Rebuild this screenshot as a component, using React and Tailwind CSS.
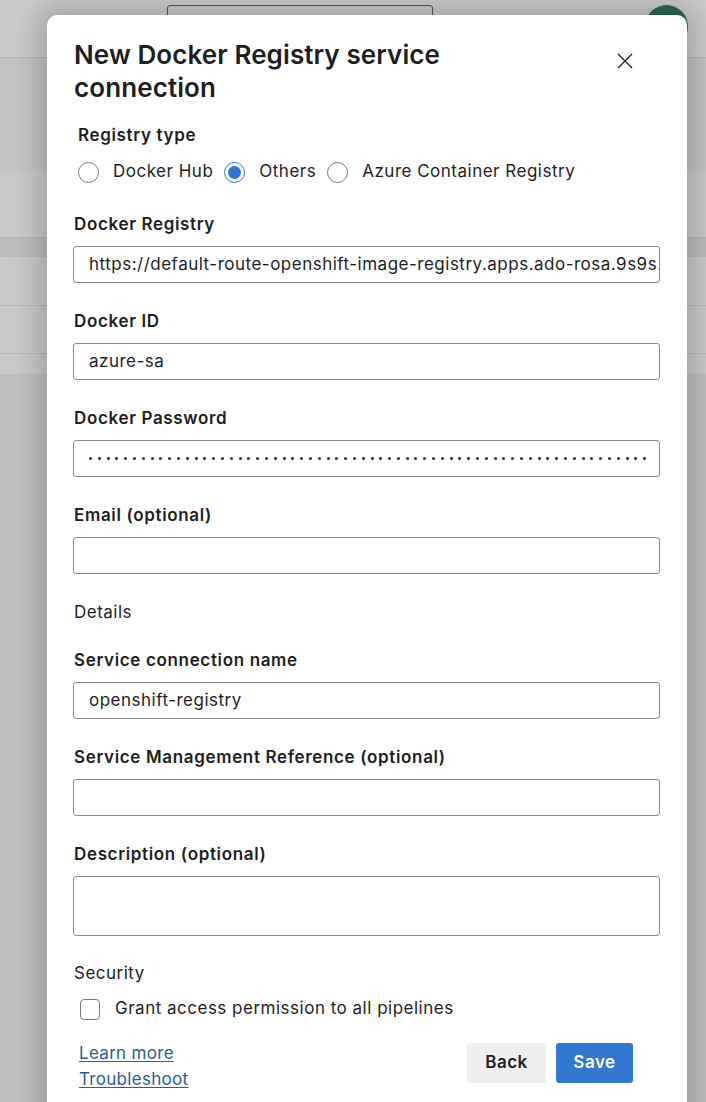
import { useState } from "react";

function Field({ label, value, tall, password }) {
  return (
    <div className="flex flex-col">
      <div className="h-6 leading-6 text-[17px] font-semibold tracking-[0.65px]">{label}</div>
      <div
        className={`-ml-px mt-[10px] w-[587px] rounded-[3px] border border-[#8a8a8a] px-[15px] overflow-hidden whitespace-nowrap ${
          tall ? "h-[60px]" : "h-[37px]"
        } flex items-center text-[17px] tracking-[0.5px]`}
      >
        {password ? (
          <div className="flex gap-[5.8px]">
            {Array.from({ length: 64 }).map((_, i) => (
              <span key={i} className="block h-[3px] w-[3px] shrink-0 rounded-full bg-[#333]" />
            ))}
          </div>
        ) : (
          value
        )}
      </div>
    </div>
  );
}

function Radio({ label, checked }) {
  return (
    <label className="flex items-center">
      {checked ? (
        <span className="flex h-[21px] w-[21px] items-center justify-center rounded-full border-[1.5px] border-[#2f6fd3]">
          <span className="h-[13px] w-[13px] rounded-full bg-[#2f73d8]" />
        </span>
      ) : (
        <span className="h-[21px] w-[21px] rounded-full border border-[#7a7a7a] bg-white" />
      )}
      <span className="ml-[14px] mr-[11px]">{label}</span>
    </label>
  );
}

export default function App() {
  const [grant, setGrant] = useState(false);

  return (
    <div className="relative h-[1102px] w-[706px] overflow-hidden bg-[#bfbfbf] font-[Inter,sans-serif] text-[#1e1e1e]">
      {/* dimmed page behind */}
      <div className="flex h-[58px] items-start border-b border-[#b5b5b5] bg-[#cacaca]">
        <div className="ml-[167px] mt-[5px] h-[40px] w-[266px] rounded-[3px] border border-[#555]" />
        <div className="ml-auto mr-[18px] mt-[5px] h-[43px] w-[43px] rounded-full bg-[#2b6657]" />
      </div>
      <div className="flex flex-col">
        <div className="h-[113px] bg-[#c3c3c3]" />
        <div className="h-[67px] border-b border-[#b8b8b8] bg-[#c9c9c9]" />
        <div className="h-[19px] bg-[#bcbcbc]" />
        <div className="h-[49px] border-b border-[#b8b8b8] bg-[#c9c9c9]" />
        <div className="h-[48px] border-b border-[#b8b8b8] bg-[#c9c9c9]" />
        <div className="h-[20px] bg-[#c9c9c9]" />
      </div>

      {/* modal */}
      <div className="absolute left-[47px] top-[15px] h-[1110px] w-[640px] rounded-[10px] bg-white px-[27px] pt-[23px] shadow-[0_0_24px_10px_rgba(0,0,0,0.18)]">
        <div className="flex items-start justify-between">
          <h1 className="w-[420px] text-[26px] font-semibold leading-[33px] tracking-[0.1px]">
            New Docker Registry service connection
          </h1>
          <button className="mr-[27px] mt-[15px] flex h-4 w-4 items-center justify-center">
            <svg width="16" height="16" viewBox="0 0 16 16" fill="none" stroke="#222" strokeWidth="1.4">
              <path d="M1 1 L15 15 M15 1 L1 15" />
            </svg>
          </button>
        </div>

        <div className="ml-[4px] mt-[19px] h-6 text-[17px] font-semibold leading-6 tracking-[0.65px]">Registry type</div>
        <div className="ml-[4px] mt-[13px] flex h-6 items-center text-[17px] tracking-[0.5px]">
          <Radio label="Docker Hub" />
          <Radio label="Others" checked />
          <Radio label="Azure Container Registry" />
        </div>

        <div className="mt-[28px] flex flex-col gap-[26px]">
          <Field
            label="Docker Registry"
            value="https://default-route-openshift-image-registry.apps.ado-rosa.9s9s.p1.openshiftapps.com"
          />
          <Field label="Docker ID" value="azure-sa" />
          <Field label="Docker Password" password />
          <Field label="Email (optional)" value="" />
        </div>

        <div className="mt-[26px] h-6 text-[17px] leading-6 tracking-[0.5px]">Details</div>

        <div className="mt-[24px] flex flex-col gap-[26px]">
          <Field label="Service connection name" value="openshift-registry" />
          <Field label="Service Management Reference (optional)" value="" />
          <Field label="Description (optional)" value="" tall />
        </div>

        <div className="mt-[25px] h-6 text-[17px] leading-6 tracking-[0.5px]">Security</div>
        <label
          className="ml-[6px] mt-[12px] flex h-6 items-center text-[17px] tracking-[0.5px]"
          onClick={() => setGrant(!grant)}
        >
          <span className="h-[21px] w-[20px] rounded-[4px] border border-[#7a7a7a]" />
          <span className="ml-[15px]">Grant access permission to all pipelines</span>
        </label>

        <div className="mt-[22px] flex items-start">
          <div className="-mt-[3px] ml-[5px] flex flex-col text-[17px] leading-[26px] tracking-[0.3px] text-[#2a5ca6]">
            <a className="underline underline-offset-2">Learn more</a>
            <a className="underline underline-offset-2">Troubleshoot</a>
          </div>
          <div className="ml-auto mr-[27px] flex gap-[10px]">
            <button className="h-[40px] w-[79px] rounded-[3px] bg-[#efefef] text-[17px] font-semibold tracking-[0.5px]">
              Back
            </button>
            <button className="h-[40px] w-[77px] rounded-[3px] bg-[#3277d1] text-[17px] font-semibold tracking-[0.5px] text-white">
              Save
            </button>
          </div>
        </div>
      </div>
    </div>
  );
}
